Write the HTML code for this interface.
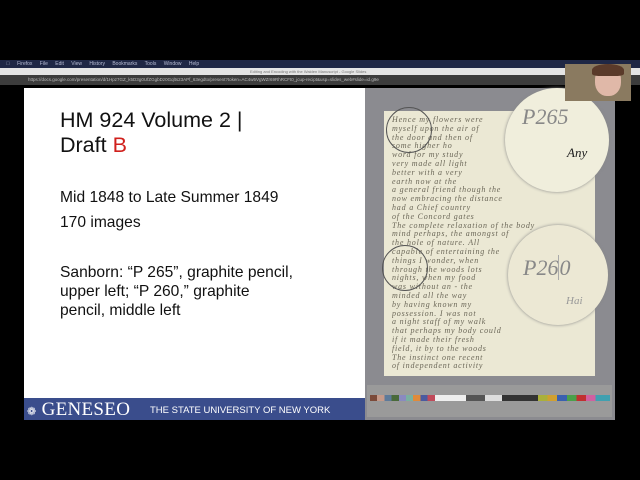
<!DOCTYPE html>
<html><head><style>
*{margin:0;padding:0;box-sizing:border-box}
body{width:640px;height:480px;background:#000;position:relative;overflow:hidden;font-family:"Liberation Sans",sans-serif}
.a{position:absolute}
.t{color:#111;font-size:15.6px;line-height:19px;position:absolute;left:60px}
.hw{position:absolute;left:392px;top:116px;width:198px;height:256px;font:italic 8px/8.8px "Liberation Serif",serif;color:#4a4638;letter-spacing:.8px;opacity:.8;white-space:nowrap;overflow:hidden}
</style></head><body>
<div class="a" style="left:0;top:60px;width:640px;height:8px;background:#1f2745"></div>
<div class="a" style="left:6px;top:60px;font-size:5px;color:#b8bdd6;line-height:8px;word-spacing:6px">&#63743; Firefox File Edit View History Bookmarks Tools Window Help</div>
<div class="a" style="left:0;top:68px;width:640px;height:7px;background:#e4e4e4"></div>
<div class="a" style="left:250px;top:68px;font-size:4px;color:#777;line-height:7px">Editing and Encoding with the Walden Manuscript - Google Slides</div>
<div class="a" style="left:0;top:75px;width:640px;height:10px;background:#3c3c3c"></div>
<div class="a" style="left:28px;top:75px;font-size:4.5px;color:#bbb;line-height:10px;white-space:nowrap">https://docs.google.com/presentation/d/1Hpz7GZ_k5D3g0UfZGgbDz0Gqlts23APf_63egdto/present?token=AC4w5VgWZr69RhRCFt0_jcup-recipt&amp;usp=slides_web#slide=id.g9e</div>
<div class="a" style="left:24px;top:88px;width:341px;height:310px;background:#fff"></div>
<div class="a" style="left:60px;top:108px;font-size:21.5px;line-height:25px;color:#111">HM 924 Volume 2 |<br>Draft <span style="color:#d0201c">B</span></div>
<div class="t" style="top:188px">Mid 1848 to Late Summer 1849</div>
<div class="t" style="top:213px">170 images</div>
<div class="t" style="top:263px">Sanborn: “P 265”, graphite pencil,<br>upper left; “P 260,” graphite<br>pencil, middle left</div>
<div class="a" style="left:24px;top:398px;width:341px;height:22px;background:#3a4d8c"></div>
<div class="a" style="left:27px;top:400px;font:19px/20px 'Liberation Serif',serif;color:#fff;letter-spacing:.3px"><span style="font-size:11px">&#10049;</span> GENESEO</div>
<div class="a" style="left:150px;top:405px;font-size:9.5px;color:#fff;line-height:12px">THE STATE UNIVERSITY OF NEW YORK</div>
<div class="a" style="left:365px;top:88px;width:250px;height:332px;background:#8b8b90"></div>
<div class="a" style="left:384px;top:111px;width:211px;height:265px;background:#ebe8d4"></div>
<div class="hw">Hence my flowers were<br>myself upon the air of<br>the door and then of<br>some higher ho<br>word for my study<br>very made all light<br>better with a very<br>earth now at the<br>a general friend though the<br>now embracing the distance<br>had a Chief country<br>of the Concord gates<br>The complete relaxation of the body<br>mind perhaps, the amongst of<br>the hole of nature. All<br>capable of entertaining the<br>things I wonder, when<br>through the woods lots<br>nights, when my food<br>was without an - the<br>minded all the way<br>by having known my<br>possession. I was not<br>a night staff of my walk<br>that perhaps my body could<br>if it made their fresh<br>field, it by to the woods<br>The instinct one recent<br>of independent activity</div>
<div class="a" style="left:386px;top:107px;width:46px;height:46px;border:1px solid #555;border-radius:50%"></div>
<div class="a" style="left:382px;top:245px;width:46px;height:46px;border:1px solid #555;border-radius:50%"></div>
<div class="a" style="left:505px;top:88px;width:104px;height:104px;border-radius:50%;background:#f0eedc;box-shadow:0 0 3px #888"></div>
<div class="a" style="left:522px;top:104px;font:italic 22px 'Liberation Serif',serif;color:#888">P265</div>
<div class="a" style="left:567px;top:145px;font:italic 13px 'Liberation Serif',serif;color:#222">Any</div>
<div class="a" style="left:508px;top:225px;width:100px;height:100px;border-radius:50%;background:#ece8d4;box-shadow:0 0 3px #888"></div>
<div class="a" style="left:523px;top:255px;font:italic 22px 'Liberation Serif',serif;color:#888">P26<span style="border-left:1px solid #aaa">0</span></div>
<div class="a" style="left:566px;top:295px;font:italic 11px 'Liberation Serif',serif;color:#999">Hai</div>
<div class="a" style="left:367px;top:385px;width:245px;height:32px;background:#9a9a9a"></div>
<div class="a" style="left:370px;top:395px;width:240px;height:6px;background:linear-gradient(90deg,#7b4a3a 0 3%,#c59a8a 3% 6%,#5d7a9a 6% 9%,#4a6a3a 9% 12%,#8a8ac0 12% 15%,#7ab0a0 15% 18%,#e08a3a 18% 21%,#4a5aa0 21% 24%,#c04a5a 24% 27%,#eee 27% 40%,#555 40% 48%,#ddd 48% 55%,#333 55% 70%,#aab03a 70% 74%,#d0a030 74% 78%,#3a60b0 78% 82%,#4aa04a 82% 86%,#c03030 86% 90%,#d060a0 90% 94%,#40a0b0 94% 100%)"></div>
<div class="a" style="left:565px;top:64px;width:66px;height:37px;background:#8a7a60"></div>
<div class="a" style="left:595px;top:66px;width:26px;height:30px;border-radius:45%;background:#e0b8a8"></div>
<div class="a" style="left:592px;top:64px;width:32px;height:12px;border-radius:50% 50% 20% 20%;background:#5a3a2a"></div>
</body></html>
